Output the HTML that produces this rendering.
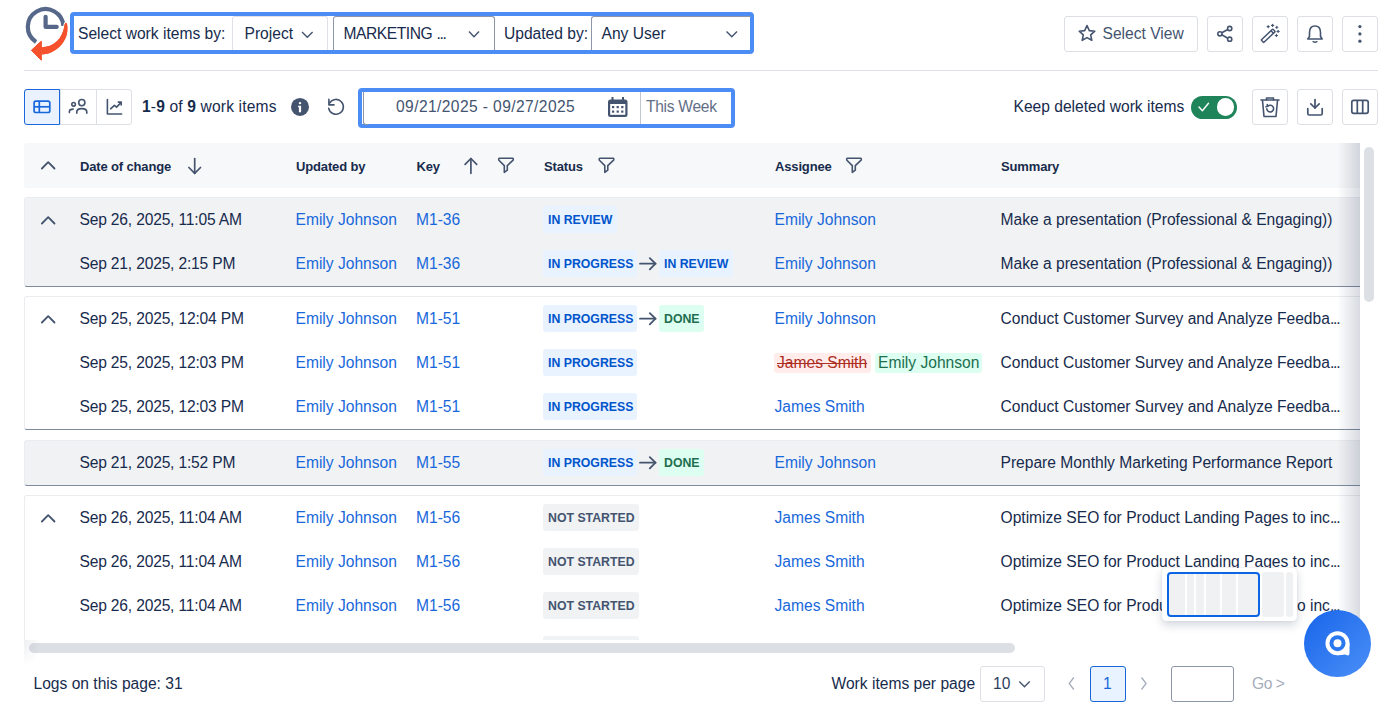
<!DOCTYPE html>
<html><head><meta charset="utf-8">
<style>
html,body{margin:0;padding:0;background:#fff;}
body{width:1384px;height:707px;position:relative;overflow:hidden;font-family:"Liberation Sans",sans-serif;}
.t{position:absolute;white-space:nowrap;line-height:20px;}
.b{position:absolute;}
.ov{position:absolute;left:0;top:0;overflow:visible;}
.clip{position:absolute;left:24px;top:143px;width:1336px;height:497px;overflow:hidden;}
.clip .ov{left:0;top:0;}
.bd span{display:inline-block;transform:scaleX(0.925);transform-origin:0 50%;}
.bd{position:absolute;height:26.6px;line-height:27px;padding:0 0 0 5px;font-size:13.3px;letter-spacing:0px;font-weight:bold;border-radius:3px;white-space:nowrap;box-sizing:border-box;}
.ab{position:absolute;height:20px;line-height:20px;top:0;font-size:15.6px;border-radius:3px;white-space:nowrap;padding:0 3px;box-sizing:border-box;}
.el{letter-spacing:-1.1px;}
.shade{position:absolute;left:1313px;top:0;width:23px;height:497px;background:linear-gradient(90deg,rgba(9,30,66,0),rgba(9,30,66,0.16));}
</style></head><body>
<div class="b" style="left:69.5px;top:12px;width:684.5px;height:42px;border:4px solid #4b8cf5;border-radius:4px;box-sizing:border-box;"></div>
<div class="t" style="left:78px;top:23.59px;font-size:15.6px;color:#172b4d;font-weight:normal;">Select work items by:</div>
<div class="b" style="left:231.5px;top:16px;width:96px;height:34px;border:1px solid #dfe1e6;border-bottom:none;border-radius:3px 3px 0 0;box-sizing:border-box;"></div>
<div class="t" style="left:244.5px;top:23.59px;font-size:15.6px;color:#172b4d;font-weight:normal;">Project</div>
<div class="b" style="left:333px;top:16px;width:162px;height:34px;border:1px solid #8c96a8;border-bottom:none;border-radius:3px 3px 0 0;box-sizing:border-box;"></div>
<div class="t" style="left:343.5px;top:23.59px;font-size:15.6px;color:#172b4d;font-weight:normal;"><span style="letter-spacing:-0.45px">MARKETING</span> <span style="letter-spacing:-1.3px">...</span></div>
<div class="t" style="left:504px;top:23.59px;font-size:15.6px;color:#172b4d;font-weight:normal;">Updated by:</div>
<div class="b" style="left:591px;top:16px;width:160px;height:34px;border:1px solid #8c96a8;border-bottom:none;border-right:none;border-radius:3px 0 0 0;box-sizing:border-box;"></div>
<div class="t" style="left:601.5px;top:23.59px;font-size:15.6px;color:#172b4d;font-weight:normal;">Any User</div>
<div class="b" style="left:1064px;top:16px;width:133.5px;height:35.5px;border:1px solid #dcdfe4;border-radius:3px;box-sizing:border-box;"></div>
<div class="t" style="left:1102.5px;top:23.59px;font-size:15.6px;color:#44546f;font-weight:normal;">Select View</div>
<div class="b" style="left:1207px;top:16px;width:35.5px;height:35.5px;border:1px solid #dcdfe4;border-radius:3px;box-sizing:border-box;"></div>
<div class="b" style="left:1252px;top:16px;width:35.5px;height:35.5px;border:1px solid #dcdfe4;border-radius:3px;box-sizing:border-box;"></div>
<div class="b" style="left:1297px;top:16px;width:35.5px;height:35.5px;border:1px solid #dcdfe4;border-radius:3px;box-sizing:border-box;"></div>
<div class="b" style="left:1342px;top:16px;width:35.5px;height:35.5px;border:1px solid #dcdfe4;border-radius:3px;box-sizing:border-box;"></div>
<div class="b" style="left:24px;top:70px;width:1354px;height:1px;background:#dcdfe4;"></div>
<div class="b" style="left:24px;top:89px;width:108px;height:36px;border:1px solid #dcdfe4;border-radius:3px;box-sizing:border-box;"></div>
<div class="b" style="left:60px;top:89px;width:1px;height:36px;background:#dcdfe4;"></div>
<div class="b" style="left:95.5px;top:89px;width:1px;height:36px;background:#dcdfe4;"></div>
<div class="b" style="left:24px;top:89px;width:36px;height:36px;border:1px solid #1868db;background:#e9f2fe;border-radius:3px 0 0 3px;box-sizing:border-box;"></div>
<div class="t" style="left:142px;top:96.59px;font-size:15.6px;color:#172b4d;font-weight:normal;letter-spacing:0.15px;"><b>1</b>-<b>9</b> of <b>9</b> work items</div>
<div class="b" style="left:358px;top:88px;width:377px;height:40px;border:4px solid #4b8cf5;border-radius:4px;box-sizing:border-box;"></div>
<div class="b" style="left:362.5px;top:92px;width:4px;height:32px;border-left:1px solid #8c96a8;border-bottom:1px solid #8c96a8;border-radius:0 0 0 3px;"></div>
<div class="b" style="left:640px;top:92px;width:1px;height:32px;background:#c1c7d0;"></div>
<div class="t" style="left:396px;top:96.59px;font-size:15.6px;color:#44546f;font-weight:normal;letter-spacing:0.4px;">09/21/2025 - 09/27/2025</div>
<div class="t" style="left:646px;top:96.59px;font-size:15.6px;color:#626f86;font-weight:normal;letter-spacing:-0.3px;">This Week</div>
<div class="t" style="left:1013.5px;top:96.59px;font-size:15.6px;color:#172b4d;font-weight:normal;">Keep deleted work items</div>
<div class="b" style="left:1191px;top:96px;width:46px;height:23px;background:#1f845a;border-radius:12px;"></div>
<div class="b" style="left:1216.6px;top:97.9px;width:17.8px;height:17.8px;background:#fff;border-radius:50%;"></div>
<div class="b" style="left:1252px;top:89px;width:35.5px;height:35.5px;border:1px solid #dcdfe4;border-radius:3px;box-sizing:border-box;"></div>
<div class="b" style="left:1297px;top:89px;width:35.5px;height:35.5px;border:1px solid #dcdfe4;border-radius:3px;box-sizing:border-box;"></div>
<div class="b" style="left:1342px;top:89px;width:35.5px;height:35.5px;border:1px solid #dcdfe4;border-radius:3px;box-sizing:border-box;"></div>
<div class="clip">
<div class="b" style="left:0px;top:0px;width:1400px;height:45px;background:#f7f8f9;border-radius:3px;"></div>
<div class="t" style="left:56px;top:13.50px;font-size:13px;color:#172b4d;font-weight:bold;letter-spacing:-0.15px;">Date of change</div>
<div class="t" style="left:272px;top:13.50px;font-size:13px;color:#172b4d;font-weight:bold;letter-spacing:-0.15px;">Updated by</div>
<div class="t" style="left:392.5px;top:13.50px;font-size:13px;color:#172b4d;font-weight:bold;letter-spacing:-0.15px;">Key</div>
<div class="t" style="left:520px;top:13.50px;font-size:13px;color:#172b4d;font-weight:bold;letter-spacing:-0.15px;">Status</div>
<div class="t" style="left:751px;top:13.50px;font-size:13px;color:#172b4d;font-weight:bold;letter-spacing:-0.15px;">Assignee</div>
<div class="t" style="left:977px;top:13.50px;font-size:13px;color:#172b4d;font-weight:bold;letter-spacing:-0.15px;">Summary</div>
<div class="b" style="left:0px;top:54px;width:1400px;height:90px;background:#f1f2f4;border:1px solid #ebecf0;border-bottom:1px solid #7f8a9c;border-radius:3px;box-sizing:border-box;"></div>
<div class="t" style="left:55.5px;top:66.59px;font-size:15.6px;color:#172b4d;font-weight:normal;letter-spacing:-0.18px;">Sep 26, 2025, 11:05 AM</div>
<div class="t" style="left:271.5px;top:66.59px;font-size:15.6px;color:#1868db;font-weight:normal;">Emily Johnson</div>
<div class="t" style="left:392px;top:66.59px;font-size:15.6px;color:#1868db;font-weight:normal;">M1-36</div>
<div class="bd" style="left:519px;top:63px;width:74px;background:#e9f2ff;color:#0055cc;"><span>IN REVIEW</span></div>
<div class="t" style="left:750.5px;top:66.59px;font-size:15.6px;color:#1868db;font-weight:normal;">Emily Johnson</div>
<div class="t" style="left:976.5px;top:66.59px;font-size:15.6px;color:#172b4d;font-weight:normal;">Make a presentation (Professional &amp; Engaging))</div>
<div class="t" style="left:55.5px;top:110.59px;font-size:15.6px;color:#172b4d;font-weight:normal;letter-spacing:-0.18px;">Sep 21, 2025, 2:15 PM</div>
<div class="t" style="left:271.5px;top:110.59px;font-size:15.6px;color:#1868db;font-weight:normal;">Emily Johnson</div>
<div class="t" style="left:392px;top:110.59px;font-size:15.6px;color:#1868db;font-weight:normal;">M1-36</div>
<div class="bd" style="left:519px;top:107px;width:94px;background:#e9f2ff;color:#0055cc;"><span>IN PROGRESS</span></div>
<div class="bd" style="left:635px;top:107px;width:74px;background:#e9f2ff;color:#0055cc;"><span>IN REVIEW</span></div>
<div class="t" style="left:750.5px;top:110.59px;font-size:15.6px;color:#1868db;font-weight:normal;">Emily Johnson</div>
<div class="t" style="left:976.5px;top:110.59px;font-size:15.6px;color:#172b4d;font-weight:normal;">Make a presentation (Professional &amp; Engaging))</div>
<div class="b" style="left:0px;top:153px;width:1400px;height:134px;background:#ffffff;border:1px solid #ebecf0;border-bottom:1px solid #7f8a9c;border-radius:3px;box-sizing:border-box;"></div>
<div class="t" style="left:55.5px;top:165.59px;font-size:15.6px;color:#172b4d;font-weight:normal;letter-spacing:-0.18px;">Sep 25, 2025, 12:04 PM</div>
<div class="t" style="left:271.5px;top:165.59px;font-size:15.6px;color:#1868db;font-weight:normal;">Emily Johnson</div>
<div class="t" style="left:392px;top:165.59px;font-size:15.6px;color:#1868db;font-weight:normal;">M1-51</div>
<div class="bd" style="left:519px;top:162px;width:94px;background:#e9f2ff;color:#0055cc;"><span>IN PROGRESS</span></div>
<div class="bd" style="left:635px;top:162px;width:44.7px;background:#dcfff1;color:#216e4e;"><span>DONE</span></div>
<div class="t" style="left:750.5px;top:165.59px;font-size:15.6px;color:#1868db;font-weight:normal;">Emily Johnson</div>
<div class="t" style="left:976.5px;top:165.59px;font-size:15.6px;color:#172b4d;font-weight:normal;">Conduct Customer Survey and Analyze Feedba<span class="el">...</span></div>
<div class="t" style="left:55.5px;top:209.59px;font-size:15.6px;color:#172b4d;font-weight:normal;letter-spacing:-0.18px;">Sep 25, 2025, 12:03 PM</div>
<div class="t" style="left:271.5px;top:209.59px;font-size:15.6px;color:#1868db;font-weight:normal;">Emily Johnson</div>
<div class="t" style="left:392px;top:209.59px;font-size:15.6px;color:#1868db;font-weight:normal;">M1-51</div>
<div class="bd" style="left:519px;top:206px;width:94px;background:#e9f2ff;color:#0055cc;"><span>IN PROGRESS</span></div>
<div class="ab" style="left:750px;top:209.6px;background:#ffeceb;color:#ae2e24;text-decoration:line-through;width:96.5px;">James Smith</div>
<div class="ab" style="left:851px;top:209.6px;background:#dcfff1;color:#216e4e;width:107px;">Emily Johnson</div>
<div class="t" style="left:976.5px;top:209.59px;font-size:15.6px;color:#172b4d;font-weight:normal;">Conduct Customer Survey and Analyze Feedba<span class="el">...</span></div>
<div class="t" style="left:55.5px;top:253.59px;font-size:15.6px;color:#172b4d;font-weight:normal;letter-spacing:-0.18px;">Sep 25, 2025, 12:03 PM</div>
<div class="t" style="left:271.5px;top:253.59px;font-size:15.6px;color:#1868db;font-weight:normal;">Emily Johnson</div>
<div class="t" style="left:392px;top:253.59px;font-size:15.6px;color:#1868db;font-weight:normal;">M1-51</div>
<div class="bd" style="left:519px;top:250px;width:94px;background:#e9f2ff;color:#0055cc;"><span>IN PROGRESS</span></div>
<div class="t" style="left:750.5px;top:253.59px;font-size:15.6px;color:#1868db;font-weight:normal;">James Smith</div>
<div class="t" style="left:976.5px;top:253.59px;font-size:15.6px;color:#172b4d;font-weight:normal;">Conduct Customer Survey and Analyze Feedba<span class="el">...</span></div>
<div class="b" style="left:0px;top:297px;width:1400px;height:46px;background:#f1f2f4;border:1px solid #ebecf0;border-bottom:1px solid #7f8a9c;border-radius:3px;box-sizing:border-box;"></div>
<div class="t" style="left:55.5px;top:309.59px;font-size:15.6px;color:#172b4d;font-weight:normal;letter-spacing:-0.18px;">Sep 21, 2025, 1:52 PM</div>
<div class="t" style="left:271.5px;top:309.59px;font-size:15.6px;color:#1868db;font-weight:normal;">Emily Johnson</div>
<div class="t" style="left:392px;top:309.59px;font-size:15.6px;color:#1868db;font-weight:normal;">M1-55</div>
<div class="bd" style="left:519px;top:306px;width:94px;background:#e9f2ff;color:#0055cc;"><span>IN PROGRESS</span></div>
<div class="bd" style="left:635px;top:306px;width:44.7px;background:#dcfff1;color:#216e4e;"><span>DONE</span></div>
<div class="t" style="left:750.5px;top:309.59px;font-size:15.6px;color:#1868db;font-weight:normal;">Emily Johnson</div>
<div class="t" style="left:976.5px;top:309.59px;font-size:15.6px;color:#172b4d;font-weight:normal;">Prepare Monthly Marketing Performance Report</div>
<div class="b" style="left:0px;top:352px;width:1400px;height:179px;background:#ffffff;border:1px solid #ebecf0;border-bottom:1px solid #7f8a9c;border-radius:3px;box-sizing:border-box;"></div>
<div class="t" style="left:55.5px;top:364.59px;font-size:15.6px;color:#172b4d;font-weight:normal;letter-spacing:-0.18px;">Sep 26, 2025, 11:04 AM</div>
<div class="t" style="left:271.5px;top:364.59px;font-size:15.6px;color:#1868db;font-weight:normal;">Emily Johnson</div>
<div class="t" style="left:392px;top:364.59px;font-size:15.6px;color:#1868db;font-weight:normal;">M1-56</div>
<div class="bd" style="left:519px;top:361px;width:96.4px;background:#f1f2f4;color:#44546f;"><span>NOT STARTED</span></div>
<div class="t" style="left:750.5px;top:364.59px;font-size:15.6px;color:#1868db;font-weight:normal;">James Smith</div>
<div class="t" style="left:976.5px;top:364.59px;font-size:15.6px;color:#172b4d;font-weight:normal;">Optimize SEO for Product Landing Pages to inc<span class="el">...</span></div>
<div class="t" style="left:55.5px;top:408.59px;font-size:15.6px;color:#172b4d;font-weight:normal;letter-spacing:-0.18px;">Sep 26, 2025, 11:04 AM</div>
<div class="t" style="left:271.5px;top:408.59px;font-size:15.6px;color:#1868db;font-weight:normal;">Emily Johnson</div>
<div class="t" style="left:392px;top:408.59px;font-size:15.6px;color:#1868db;font-weight:normal;">M1-56</div>
<div class="bd" style="left:519px;top:405px;width:96.4px;background:#f1f2f4;color:#44546f;"><span>NOT STARTED</span></div>
<div class="t" style="left:750.5px;top:408.59px;font-size:15.6px;color:#1868db;font-weight:normal;">James Smith</div>
<div class="t" style="left:976.5px;top:408.59px;font-size:15.6px;color:#172b4d;font-weight:normal;">Optimize SEO for Product Landing Pages to inc<span class="el">...</span></div>
<div class="t" style="left:55.5px;top:452.59px;font-size:15.6px;color:#172b4d;font-weight:normal;letter-spacing:-0.18px;">Sep 26, 2025, 11:04 AM</div>
<div class="t" style="left:271.5px;top:452.59px;font-size:15.6px;color:#1868db;font-weight:normal;">Emily Johnson</div>
<div class="t" style="left:392px;top:452.59px;font-size:15.6px;color:#1868db;font-weight:normal;">M1-56</div>
<div class="bd" style="left:519px;top:449px;width:96.4px;background:#f1f2f4;color:#44546f;"><span>NOT STARTED</span></div>
<div class="t" style="left:750.5px;top:452.59px;font-size:15.6px;color:#1868db;font-weight:normal;">James Smith</div>
<div class="t" style="left:976.5px;top:452.59px;font-size:15.6px;color:#172b4d;font-weight:normal;">Optimize SEO for Product Landing Pages to inc<span class="el">...</span></div>
<div class="t" style="left:55.5px;top:496.59px;font-size:15.6px;color:#172b4d;font-weight:normal;letter-spacing:-0.18px;">Sep 26, 2025, 11:04 AM</div>
<div class="t" style="left:271.5px;top:496.59px;font-size:15.6px;color:#1868db;font-weight:normal;">Emily Johnson</div>
<div class="t" style="left:392px;top:496.59px;font-size:15.6px;color:#1868db;font-weight:normal;">M1-56</div>
<div class="bd" style="left:519px;top:493px;width:96.4px;background:#f1f2f4;color:#44546f;"><span>NOT STARTED</span></div>
<div class="t" style="left:750.5px;top:496.59px;font-size:15.6px;color:#1868db;font-weight:normal;">James Smith</div>
<div class="t" style="left:976.5px;top:496.59px;font-size:15.6px;color:#172b4d;font-weight:normal;">Optimize SEO for Product Landing Pages to inc<span class="el">...</span></div>
<svg class="ov" width="1336" height="497" viewBox="24 143 1336 497"><polyline points="41.9,168.5 48.2,162.2 54.5,168.5" fill="none" stroke="#44546f" stroke-width="1.8" stroke-linecap="round" stroke-linejoin="round"/><g fill="none" stroke="#44546f" stroke-width="1.7" stroke-linecap="round" stroke-linejoin="round"><path d="M194.7,158.5 V173.3"/><path d="M188.9,167.5 L194.7,173.3 L200.5,167.5"/><path d="M470.9,158.5 V173.3"/><path d="M465.1,164.3 L470.9,158.5 L476.7,164.3"/></g><path transform="translate(497.5,157)" d="M1.8,1.2 H15.2 Q16.2,1.4 15.6,3.2 L9.8,8.6 V13.2 L6.8,15.4 V8.6 L1.4,3.2 Q0.8,1.4 1.8,1.2 Z" fill="none" stroke="#44546f" stroke-width="1.6" stroke-linejoin="round"/><path transform="translate(598,157)" d="M1.8,1.2 H15.2 Q16.2,1.4 15.6,3.2 L9.8,8.6 V13.2 L6.8,15.4 V8.6 L1.4,3.2 Q0.8,1.4 1.8,1.2 Z" fill="none" stroke="#44546f" stroke-width="1.6" stroke-linejoin="round"/><path transform="translate(845.5,157)" d="M1.8,1.2 H15.2 Q16.2,1.4 15.6,3.2 L9.8,8.6 V13.2 L6.8,15.4 V8.6 L1.4,3.2 Q0.8,1.4 1.8,1.2 Z" fill="none" stroke="#44546f" stroke-width="1.6" stroke-linejoin="round"/><polyline points="41.9,223.5 48.2,217.2 54.5,223.5" fill="none" stroke="#44546f" stroke-width="1.8" stroke-linecap="round" stroke-linejoin="round"/><g fill="none" stroke="#44546f" stroke-width="1.8" stroke-linecap="round" stroke-linejoin="round"><path d="M640,263.7 H655.5"/><path d="M649.8,258.09999999999997 L655.5,263.7 L649.8,269.3"/></g><polyline points="41.9,322.5 48.2,316.2 54.5,322.5" fill="none" stroke="#44546f" stroke-width="1.8" stroke-linecap="round" stroke-linejoin="round"/><g fill="none" stroke="#44546f" stroke-width="1.8" stroke-linecap="round" stroke-linejoin="round"><path d="M640,318.7 H655.5"/><path d="M649.8,313.09999999999997 L655.5,318.7 L649.8,324.3"/></g><g fill="none" stroke="#44546f" stroke-width="1.8" stroke-linecap="round" stroke-linejoin="round"><path d="M640,462.7 H655.5"/><path d="M649.8,457.09999999999997 L655.5,462.7 L649.8,468.3"/></g><polyline points="41.9,521.5 48.2,515.2 54.5,521.5" fill="none" stroke="#44546f" stroke-width="1.8" stroke-linecap="round" stroke-linejoin="round"/></svg>
<div class="shade"></div>
</div>
<div class="b" style="left:1364px;top:147px;width:10px;height:154.5px;background:#dcdfe4;border-radius:5px;"></div>
<div class="b" style="left:28.5px;top:643px;width:986.5px;height:10px;background:#dcdfe4;border-radius:5px;"></div>
<div class="b" style="left:24px;top:640px;width:18px;height:26px;background:radial-gradient(ellipse 18px 26px at 0 0,rgba(9,30,66,0.07),rgba(9,30,66,0));"></div>
<div class="t" style="left:33.5px;top:673.79px;font-size:15.6px;color:#172b4d;font-weight:normal;">Logs on this page: 31</div>
<div class="t" style="left:831.5px;top:674.09px;font-size:15.6px;color:#172b4d;font-weight:normal;">Work items per page</div>
<div class="b" style="left:980px;top:666px;width:65px;height:36px;border:1px solid #dcdfe4;border-radius:3px;box-sizing:border-box;"></div>
<div class="t" style="left:993px;top:674.09px;font-size:15.6px;color:#2c3e5d;font-weight:normal;">10</div>
<div class="b" style="left:1090px;top:666px;width:35.5px;height:36px;border:1px solid #1868db;background:#e9f2ff;border-radius:3px;box-sizing:border-box;"></div>
<div class="t" style="left:1103px;top:674.09px;font-size:15.6px;color:#1868db;font-weight:normal;">1</div>
<div class="b" style="left:1171px;top:666px;width:63px;height:36px;border:1px solid #8c96a8;border-radius:3px;box-sizing:border-box;"></div>
<div class="t" style="left:1252px;top:674.09px;font-size:15.6px;color:#a5adba;font-weight:normal;letter-spacing:-0.5px;">Go &gt;</div>
<div class="b" style="left:1162px;top:567.5px;width:135px;height:53px;background:#fff;border-radius:4px;box-shadow:0 4px 10px rgba(9,30,66,0.18),0 0 1px rgba(9,30,66,0.2);">
<div class="b" style="left:7px;top:6.5px;width:16.3px;height:41px;background:#f0f1f3;"></div>
<div class="b" style="left:24.8px;top:6.5px;width:7.5px;height:41px;background:#f0f1f3;"></div>
<div class="b" style="left:34px;top:6.5px;width:8px;height:41px;background:#f0f1f3;"></div>
<div class="b" style="left:44px;top:6.5px;width:14px;height:41px;background:#f0f1f3;"></div>
<div class="b" style="left:60px;top:6.5px;width:14px;height:41px;background:#f0f1f3;"></div>
<div class="b" style="left:76px;top:6.5px;width:19.5px;height:41px;background:#f0f1f3;"></div>
<div class="b" style="left:100px;top:4.5px;width:22px;height:45px;background:#f0f1f3;border-radius:3px;"></div>
<div class="b" style="left:124px;top:4.5px;width:7px;height:45px;background:#f0f1f3;border-radius:3px;"></div>
<div class="b" style="left:5px;top:4.5px;width:92.5px;height:45px;border:2px solid #0c66e4;border-radius:4px;box-sizing:border-box;"></div>
</div>
<div class="b" style="left:1304px;top:610px;width:67px;height:67px;border-radius:50%;background:linear-gradient(135deg,#1765ea,#4b8ff7);"></div>
<svg class="b" style="left:1304px;top:610px;" width="67" height="67"><circle cx="33.5" cy="33.2" r="12" fill="#fff"/><path d="M33.5,33.2 H45.5 V42 Q45.5,45.5 44,45.6 L41,44.6 Q37.5,45.2 33.5,45.2 Z" fill="#fff"/><circle cx="33.5" cy="33.2" r="8" fill="#2a78f0"/><circle cx="33.5" cy="33.2" r="4" fill="#fff"/></svg>
<svg class="ov" width="1384" height="707">
<g>
 <path d="M36.06,41.92 A17.8,17.8 0 1 1 63.38,25.97" fill="none" stroke="#56678a" stroke-width="4.2"/>
 <path d="M45.6,16.8 V26.9 H56.7" fill="none" stroke="#56678a" stroke-width="4.2" stroke-linecap="round" stroke-linejoin="round"/>
 <path d="M66,22.8 C67.5,23.5 67.6,28 67.3,31 C66.5,42 56,54 41.4,54.6 L41.4,47.3 C54,47 62.5,39 64.6,25 C64.7,23.8 65.2,22.8 66,22.8 Z" fill="#f4512c" stroke="#fff" stroke-width="2" paint-order="stroke"/>
 <path d="M31.4,50.3 L41.3,41.2 L41.3,60.2 Z" fill="#f4512c" stroke="#fff" stroke-width="2.4" stroke-linejoin="round" paint-order="stroke"/><path d="M66,22.8 C67.5,23.5 67.6,28 67.3,31 C66.5,42 56,54 41.4,54.6 L41.4,47.3 C54,47 62.5,39 64.6,25 C64.7,23.8 65.2,22.8 66,22.8 Z" fill="#f4512c"/><path d="M31.4,50.3 L41.3,41.2 L41.3,60.2 Z" fill="#f4512c" stroke="#f4512c" stroke-width="1" stroke-linejoin="round"/>
</g><polyline points="302,32 307.3,37.3 312.6,32" fill="none" stroke="#44546f" stroke-width="1.4"/><polyline points="469,31.5 474,36.8 479,31.5" fill="none" stroke="#44546f" stroke-width="1.4"/><polyline points="726.5,31.5 731.8,36.8 737,31.5" fill="none" stroke="#44546f" stroke-width="1.4"/><path d="M1087,25.5 L1089.3,30.6 L1094.8,31.2 L1090.7,34.9 L1091.8,40.3 L1087,37.6 L1082.2,40.3 L1083.3,34.9 L1079.2,31.2 L1084.7,30.6 Z" fill="none" stroke="#44546f" stroke-width="1.6" stroke-linejoin="round"/><g fill="none" stroke="#44546f" stroke-width="1.6"><circle cx="1229.7" cy="28.5" r="2.1"/><circle cx="1229.7" cy="39.2" r="2.1"/><circle cx="1219.9" cy="33.8" r="2.1"/><line x1="1221.8" y1="32.8" x2="1227.8" y2="29.5"/><line x1="1221.8" y1="34.8" x2="1227.8" y2="38.2"/></g><g fill="none" stroke="#44546f" stroke-width="1.5" stroke-linejoin="round"><rect x="-8" y="-1.8" width="16" height="3.6" rx="0.8" transform="translate(1268.2,35.8) rotate(-43.5)"/><line x1="1271" y1="30.8" x2="1273.6" y2="33.6"/></g><g stroke="#44546f" stroke-width="1.1" stroke-linecap="round"><path d="M1267.1000000000001,26.6 H1269.3 M1268.2,25.5 V27.700000000000003"/><path d="M1271.5,25.4 H1273.6999999999998 M1272.6,24.299999999999997 V26.5"/><path d="M1275.7,27.3 H1277.8999999999999 M1276.8,26.2 V28.400000000000002"/><path d="M1277.0,31.4 H1279.1999999999998 M1278.1,30.299999999999997 V32.5"/><path d="M1275.3000000000002,35.5 H1277.5 M1276.4,34.4 V36.6"/></g><g fill="none" stroke="#44546f" stroke-width="1.6" stroke-linejoin="round"><path d="M1315,26 C1311,26 1309.5,29 1309.5,32.5 V36.5 L1307.8,39 H1322.2 L1320.5,36.5 V32.5 C1320.5,29 1319,26 1315,26 Z"/><path d="M1312.8,41.3 C1313.3,42.6 1316.7,42.6 1317.2,41.3"/></g><g fill="#44546f"><circle cx="1359.9" cy="26.6" r="1.6"/><circle cx="1359.9" cy="33.9" r="1.6"/><circle cx="1359.9" cy="41.2" r="1.6"/></g><g fill="none" stroke="#1868db" stroke-width="1.7"><rect x="34.1" y="101.1" width="15.7" height="11.4" rx="1.8"/><line x1="34.1" y1="106.8" x2="49.8" y2="106.8"/><line x1="39.3" y1="101.1" x2="39.3" y2="112.5"/></g><g fill="none" stroke="#44546f" stroke-width="1.6" stroke-linecap="round"><circle cx="81.8" cy="102.6" r="3.1"/><path d="M76.8,113.2 V112 C76.8,109.7 78.5,108.6 81.8,108.6 C85.1,108.6 86.8,109.7 86.8,112 V113.2"/><circle cx="73.6" cy="104.3" r="1.8"/><path d="M69.4,112.6 V111.6 C69.4,110 70.5,109.1 73.2,109.1"/></g><g fill="none" stroke="#44546f" stroke-width="1.6" stroke-linecap="round" stroke-linejoin="round"><path d="M107.4,99.6 V114 H121.6"/><path d="M110.6,108.8 L114.4,105.3 L116.5,107.1 L121,102.6"/><path d="M118.3,102.1 H121.2 V104.9"/></g><circle cx="300" cy="106.9" r="9" fill="#44546f"/><rect x="298.9" y="102.2" width="2.2" height="1.9" fill="#fff"/><path d="M298.1,105.8 H301.1 V112.2 H298.9 V107.2 H298.1 Z" fill="#fff"/><g fill="none" stroke="#44546f" stroke-width="1.6" stroke-linecap="round" stroke-linejoin="round"><path d="M329.6,103 A7.4,7.4 0 1 1 328.7,108.3"/><path d="M328.9,99.4 V104.9 H334"/></g><g><rect x="608" y="99.5" width="19.5" height="17.5" rx="2.5" fill="#44546f"/><rect x="610.2" y="104" width="15.1" height="10.8" fill="#fff"/><rect x="611.5" y="97" width="2" height="4" fill="#44546f"/><rect x="622" y="97" width="2" height="4" fill="#44546f"/></g><g fill="#44546f"><rect x="612" y="106" width="2.2" height="2.2"/><rect x="616.6" y="106" width="2.2" height="2.2"/><rect x="621.2" y="106" width="2.2" height="2.2"/><rect x="612" y="110.5" width="2.2" height="2.2"/><rect x="616.6" y="110.5" width="2.2" height="2.2"/><rect x="621.2" y="110.5" width="2.2" height="2.2"/></g><polyline points="1199,107 1202.4,110.8 1208.5,103.2" fill="none" stroke="#fff" stroke-width="1.4" stroke-linecap="round" stroke-linejoin="round"/><g fill="none" stroke="#44546f" stroke-width="1.6" stroke-linejoin="round" stroke-linecap="round"><path d="M1261,100 H1279"/><path d="M1266.5,100 V98 H1273.5 V100"/><path d="M1262.5,100.5 L1264,116.5 H1276 L1277.5,100.5"/><path d="M1266.8,108.8 A3.4,3.4 0 1 0 1268,106"/><path d="M1267.2,104.5 L1267.8,106.3 L1266,106.8"/></g><g fill="none" stroke="#44546f" stroke-width="1.7" stroke-linecap="round" stroke-linejoin="round"><path d="M1315,99.5 V108"/><path d="M1310.8,103.8 L1315,108 L1319.2,103.8"/><path d="M1307.8,108.5 V113.5 Q1307.8,115 1309.3,115 H1320.7 Q1322.2,115 1322.2,113.5 V108.5"/></g><g fill="none" stroke="#44546f" stroke-width="1.7"><rect x="1351.8" y="100.3" width="16.4" height="13" rx="2"/><line x1="1357.3" y1="100.3" x2="1357.3" y2="113.3"/><line x1="1362.7" y1="100.3" x2="1362.7" y2="113.3"/></g><polyline points="1019.3,681.5 1024.5,686.7 1029.7,681.5" fill="none" stroke="#44546f" stroke-width="1.4"/><polyline points="1073.8,677.5 1069.2,683.5 1073.8,689.5" fill="none" stroke="#a5adba" stroke-width="1.3"/><polyline points="1141.5,677.5 1146.1,683.5 1141.5,689.5" fill="none" stroke="#a5adba" stroke-width="1.3"/></svg>
</body></html>
